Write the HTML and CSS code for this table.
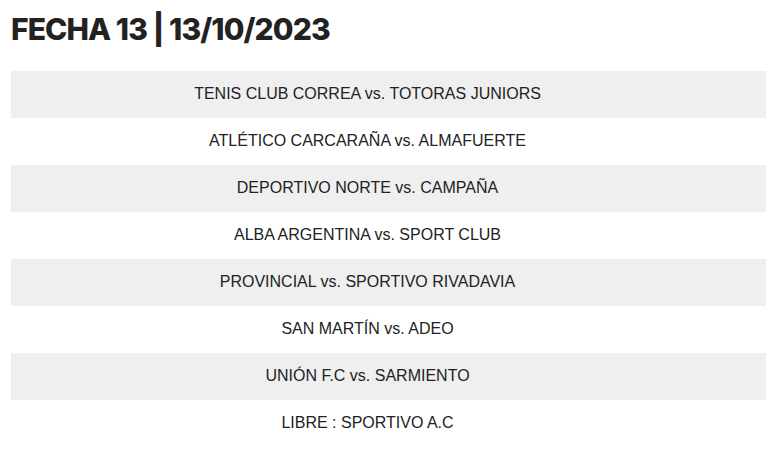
FILE: index.html
```html
<!DOCTYPE html>
<html lang="es">
<head>
<meta charset="utf-8">
<title>Fecha 13</title>
<link rel="stylesheet" href="styles.css">
</head>
<body>
<div class="page">
  <h2 class="title">FECHA 13 | 13/10/2023</h2>
  <div class="fixture">
    <div class="row">TENIS CLUB CORREA vs. TOTORAS JUNIORS</div>
    <div class="row">ATLÉTICO CARCARAÑA vs. ALMAFUERTE</div>
    <div class="row">DEPORTIVO NORTE vs. CAMPAÑA</div>
    <div class="row">ALBA ARGENTINA vs. SPORT CLUB</div>
    <div class="row">PROVINCIAL vs. SPORTIVO RIVADAVIA</div>
    <div class="row">SAN MARTÍN vs. ADEO</div>
    <div class="row">UNIÓN F.C vs. SARMIENTO</div>
    <div class="row">LIBRE : SPORTIVO A.C</div>
  </div>
</div>
</body>
</html>
```

FILE: styles.css
```css
html, body {
  margin: 0;
  padding: 0;
  background: #ffffff;
}

.page {
  padding: 10px 9px 0 11px;
}

.title {
  margin: 0 0 23px 0;
  font-family: "Inter", "Open Sans", sans-serif;
  font-weight: 800;
  font-size: 30px;
  line-height: 38px;
  letter-spacing: -0.9px;
  color: #222222;
}

.fixture {
  display: flex;
  flex-direction: column;
}

.row {
  height: 47px;
  box-sizing: border-box;
  padding: 0 42px 2px 0;
  display: flex;
  align-items: center;
  justify-content: center;
  font-family: "Liberation Sans", Arial, sans-serif;
  font-size: 16px;
  color: #222222;
}

.row:nth-child(odd) {
  background: #efefef;
}
```
